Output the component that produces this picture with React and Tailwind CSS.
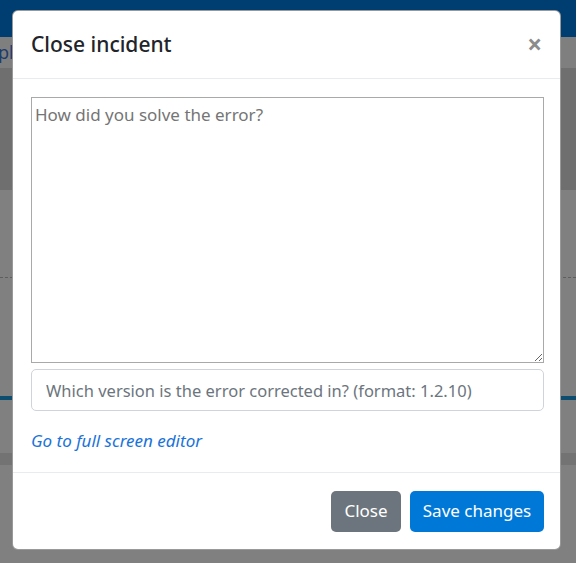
export default function App() {
  const font = { fontFamily: '"Noto Sans", "Open Sans", Arial, sans-serif' };
  return (
    <div className="relative w-[576px] h-[563px] overflow-hidden bg-[#808080]" style={font}>
      {/* dimmed page behind */}
      <div className="h-[37px] bg-[#003e71]" />
      <div className="h-[31px] bg-[#7f7f7f] flex items-center">
        <span className="text-[18px] text-[#1e3c6b] -ml-[2px]">pl</span>
      </div>
      <div className="h-[122px] bg-[#6f6f6f]" />
      <div className="h-[206px] bg-[#808080] pt-[87px]">
        <div className="border-t border-dashed border-[#5e5e5e]" />
      </div>
      <div className="h-[4px] bg-[#0d4d70]" />
      <div className="h-[53px] bg-[#808080]" />
      <div className="h-[12px] bg-[#737373]" />

      {/* modal */}
      <div className="absolute left-[12px] top-[10px] w-[549px] h-[540px] bg-white rounded-[6px] border border-black/40 flex flex-col">
        <div className="h-[68px] pl-[18px] pr-[18px] flex items-center justify-between border-b border-[#e9ecef]">
          <h5 className="text-[21px] font-medium text-[#212529] leading-none">Close incident</h5>
          <span className="text-[26px] font-bold text-[#8c8c8c] leading-none -mt-[2px]">×</span>
        </div>
        <div className="pl-[18px] pr-[16px] pt-[18px] pb-[18px] flex flex-col">
          <textarea
            className="block w-full h-[266px] border border-[#a9a9a9] px-[3px] py-[4px] text-[17px] text-[#212529] placeholder-[#757575] outline-none resize-y"
            placeholder="How did you solve the error?"
            style={font}
          />
          <input
            className="mt-[6px] h-[42px] w-full border border-[#ced4da] rounded-[5px] px-[14px] text-[16.5px] text-[#495057] placeholder-[#6c757d] outline-none"
            placeholder="Which version is the error corrected in? (format: 1.2.10)"
            style={font}
          />
          <a className="mt-[17px] leading-[26px] text-[17px] italic text-[#1a73d9]" href="#">
            Go to full screen editor
          </a>
        </div>
        <div className="flex-1 border-t border-[#e9ecef] pr-[16px] flex items-center justify-end gap-[9px]">
          <button className="h-[41px] w-[70px] rounded-[5px] bg-[#6c757d] text-white text-[17px]">Close</button>
          <button className="h-[41px] w-[134px] rounded-[5px] bg-[#0078d7] text-white text-[17px]">Save changes</button>
        </div>
      </div>
    </div>
  );
}
